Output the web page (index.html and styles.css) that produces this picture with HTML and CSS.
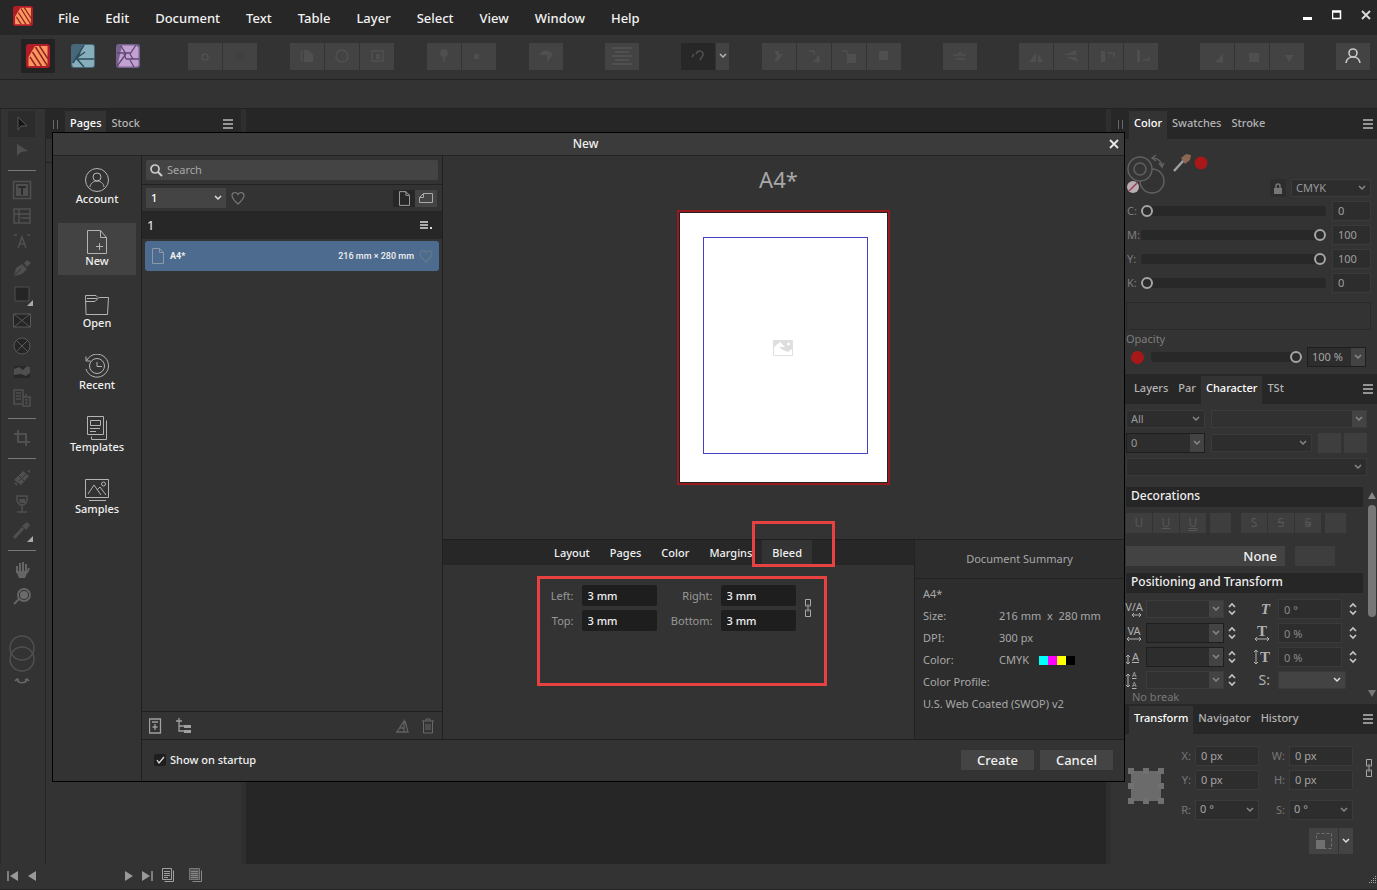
FILE: index.html
```html
<!DOCTYPE html>
<html lang="en">
<head>
<meta charset="utf-8">
<title>Publisher - New Document</title>
<link rel="stylesheet" href="styles.css">
</head>
<body>
<svg class="defs" aria-hidden="true">
  <symbol id="i-pub" viewBox="0 0 24 24"><rect width="24" height="24" rx="3" fill="#b01c28"/><path d="M9 2h12.500v20H2.500v-9z" fill="#ff9560"/><path d="M13.500 2l8.500 13M9.500 3l12 19M6.500 8l9 14M4 13l6 9" stroke="#8a2a20" stroke-width="1.500" fill="none"/></symbol>
  <symbol id="i-des" viewBox="0 0 24 24"><rect width="24" height="24" rx="3" fill="#47687a"/><path d="M12 1h9a2 2 0 0 1 2 2v18a2 2 0 0 1-2 2H2L1 20z" fill="#86aebb"/><path d="M13 1L2 19M10 6l-4 9 7 8M7 15h16M7 13l7-5" stroke="#2e4b5b" stroke-width="1.5" fill="none"/></symbol>
  <symbol id="i-pho" viewBox="0 0 24 24"><rect width="24" height="24" rx="3" fill="#75628c"/><path d="M6 1.500h14l2.500 2v18l-2 1H3l-1-3z" fill="#c3a0d2"/><path d="M5 2l5 8M1 9h14M20 1l-6 9M14 10l3 5M23 15H10M17 15l-3 0M14 16l4 7M10 15l-2-5M1 22l9-12" stroke="#5d4774" stroke-width="1.300" fill="none"/></symbol>
  <symbol id="i-menu" viewBox="0 0 10 10"><path d="M0 1h10M0 5h10M0 9h10" stroke="#b9b9b9" stroke-width="1.6"/></symbol>
  <symbol id="i-heart" viewBox="0 0 14 14"><path d="M7 13C3 9.500 1 7.500 1 4.500 1 1 5.500.5 7 3.500 8.500.5 13 1 13 4.500c0 3-2 5-6 8.500z" fill="none" stroke="currentColor" stroke-width="1.200"/></symbol>
  <symbol id="i-page" viewBox="0 0 12 16"><path d="M.5.500h7l4 4v11H.5zM7.500.500v4h4" fill="none" stroke="currentColor"/></symbol>
  <symbol id="i-spin" viewBox="0 0 8 14"><path d="M1 5l3-3 3 3M1 9l3 3 3-3" fill="none" stroke="#c4c4c4" stroke-width="1.700"/></symbol>
  <symbol id="i-link" viewBox="0 0 8 20"><path d="M1.500 8V1.500h5V8M1.500 12v6.500h5V12M4 6v8M1.500 8h2M4.500 8h2M1.500 12h2M4.500 12h2" fill="none" stroke="#a8a8a8"/></symbol>
  <symbol id="i-person" viewBox="0 0 18 18"><circle cx="9" cy="6" r="4" fill="none" stroke="currentColor" stroke-width="1.600"/><path d="M2 16c1-8 13-8 14 0" fill="none" stroke="currentColor" stroke-width="1.600"/></symbol>
</svg>

<header class="menubar">
  <svg class="logo"><use href="#i-pub"/></svg>
  <nav class="menus">
    <button>File</button><button>Edit</button><button>Document</button><button>Text</button><button>Table</button><button>Layer</button><button>Select</button><button>View</button><button>Window</button><button>Help</button>
  </nav>
  <div class="winctl">
    <button aria-label="Minimize"><svg width="10" height="10"><path d="M0 8.500h9" stroke="#fff" stroke-width="3"/></svg></button>
    <button aria-label="Maximize"><svg width="10" height="10"><path d="M.5 1h8v7.500h-8zM0 2h9" fill="none" stroke="#fff" stroke-width="1.500"/></svg></button>
    <button aria-label="Close"><svg width="10" height="10"><path d="M1 1l8 8M9 1L1 9" stroke="#ddd" stroke-width="1.800"/></svg></button>
  </div>
</header>

<div class="toolbar">
  <div class="personas">
    <button class="persona on" aria-label="Publisher"><svg><use href="#i-pub"/></svg></button>
    <button class="persona" aria-label="Designer"><svg><use href="#i-des"/></svg></button>
    <button class="persona" aria-label="Photo"><svg><use href="#i-pho"/></svg></button>
  </div>
  <div class="tgroup first">
    <button aria-label="Preferences"><svg viewBox="0 0 20 20"><circle cx="10" cy="11" r="3" class="s"/></svg></button>
    <button aria-label="Defaults"><svg viewBox="0 0 20 20"><circle cx="10" cy="10" r="5" fill="#404040"/></svg></button>
  </div>
  <div class="tgroup near">
    <button aria-label="Page layout"><svg viewBox="0 0 20 20"><path d="M4.500 4v12" class="s"/><path d="M7 4h5l4 5v7H7z" class="f"/></svg></button>
    <button aria-label="Preflight"><svg viewBox="0 0 20 20"><circle cx="10" cy="10" r="6" class="s"/></svg></button>
    <button aria-label="Package"><svg viewBox="0 0 20 20"><path d="M5 5h11v10H5z" class="s"/><path d="M9 8h4v5H9z" class="f"/></svg></button>
  </div>
  <div class="tgroup near">
    <button aria-label="Pin"><svg viewBox="0 0 20 20"><path d="M10 8v8" class="s"/><circle cx="10" cy="7" r="4" class="f"/></svg></button>
    <button aria-label="Float"><svg viewBox="0 0 20 20"><path d="M5 8h5v5H5z" class="f"/></svg></button>
  </div>
  <div class="tgroup near"><button aria-label="View mode"><svg viewBox="0 0 20 20"><path d="M3 9c3-6 11-6 14 0l-6 7V9z" class="f"/></svg></button></div>
  <div class="tgroup far"><button aria-label="Baseline grid"><svg viewBox="0 0 20 20" class="crisp"><path d="M0 2h20M3 6h14M0 10h20M3 14h14M0 18h20" class="s"/></svg></button></div>
  <div class="tgroup far">
    <button class="dark" aria-label="Snapping"><svg viewBox="0 0 20 20"><path d="M4 11l2-3M8 8c2-5 8-3 7 1l-3 5" class="s"/></svg></button><button class="narrow" aria-label="Snapping options"><svg viewBox="0 0 8 20"><path d="M1 8l3 3 3-3" fill="none" stroke="#b5b5b5" stroke-width="1.500"/></svg></button>
  </div>
  <div class="tgroup near">
    <button aria-label="Back"><svg viewBox="0 0 20 20"><path d="M5 5h5v3h4L9 15H5l3-5z" class="f"/></svg></button>
    <button aria-label="Backward"><svg viewBox="0 0 20 20"><path d="M9 16l6-8 1 8z" class="f"/><path d="M5 5h5v4" class="s"/></svg></button>
    <button aria-label="Forward"><svg viewBox="0 0 20 20"><path d="M8 8h9v9H8z" class="f"/><path d="M3 5h5v3" class="s"/></svg></button>
    <button aria-label="Front"><svg viewBox="0 0 20 20"><path d="M5 5h9v9H5z" class="f"/></svg></button>
  </div>
  <div class="tgroup far"><button aria-label="Alignment"><svg viewBox="0 0 20 20"><path d="M6 13h9M3 9h13M8 7h4" class="s"/></svg></button></div>
  <div class="tgroup far">
    <button aria-label="Flip horizontal"><svg viewBox="0 0 20 20"><path d="M3 16l7-9v9zM12 7l5 9h-5z" class="f"/></svg></button>
    <button aria-label="Flip vertical"><svg viewBox="0 0 20 20"><path d="M3 9l12-5v5zM5 11h10l2 5z" class="f"/></svg></button>
    <button aria-label="Rotate left"><svg viewBox="0 0 20 20"><path d="M5 5h4v11H5z" class="f"/><path d="M12 7h6v4" class="s"/></svg></button>
    <button aria-label="Rotate right"><svg viewBox="0 0 20 20"><path d="M6 4h3v12H6z" class="f"/><path d="M12 14h6v-3" class="s"/></svg></button>
  </div>
  <div class="tgroup far">
    <button aria-label="Add"><svg viewBox="0 0 20 20"><path d="M8 16l8-8v9z" class="f"/></svg></button>
    <button aria-label="Subtract"><svg viewBox="0 0 20 20"><path d="M7 7h10v9H7z" class="f"/></svg></button>
    <button aria-label="Intersect"><svg viewBox="0 0 20 20"><path d="M8 9h9l-5 7z" class="f"/></svg></button>
  </div>
  <div class="tgroup near"><button class="acct" aria-label="Account"><svg><use href="#i-person"/></svg></button></div>
</div>
<div class="contextbar"></div>

<main class="workspace">
  <aside class="tools">
    <button class="on" aria-label="Move"><svg viewBox="0 0 20 20"><path d="M6 3l9 9H9l-3 4z" fill="#151515" stroke="#555"/></svg></button>
    <button aria-label="Node"><svg viewBox="0 0 20 20"><path d="M5 4l11 7-7 1-4 4z" class="f"/></svg></button>
    <hr>
    <button aria-label="Frame text"><svg viewBox="0 0 20 20"><path d="M1.500 1.500h17v17h-17z" class="s"/><path d="M4 4h12v12H4z" class="f"/><path d="M6 7h8M10 7v8" stroke="#2b2b2b" stroke-width="2"/></svg></button>
    <button aria-label="Table"><svg viewBox="0 0 20 20"><path d="M2 3h16v14H2zM2 8h16M7 3v14M9 12h9" class="s"/></svg></button>
    <button aria-label="Artistic text"><svg viewBox="0 0 20 20"><path d="M6 16l4-11 4 11M7 12h6M2 3h3M15 3h3" class="s"/></svg></button>
    <button aria-label="Pen"><svg viewBox="0 0 20 20"><path d="M2 18l2-8 6-4 5 5-5 5zM12 5l3-3 4 3-4 4z" class="f"/><path d="M3 17l6-6" stroke="#333"/></svg></button>
    <button class="more" aria-label="Rectangle"><svg viewBox="0 0 20 20"><path d="M3 3h14v14H3z" fill="#252525" stroke="#505050"/></svg></button>
    <button aria-label="Picture frame"><svg viewBox="0 0 20 20"><path d="M1.500 4h17v13h-17zM2 4l16 13M18 4L2 17" fill="#252525" stroke="#585858"/></svg></button>
    <button aria-label="Ellipse frame"><svg viewBox="0 0 20 20"><circle cx="10" cy="10" r="8" fill="#252525" stroke="#585858"/><path d="M4 4l12 12M16 4L4 16" stroke="#585858"/></svg></button>
    <button aria-label="Place image"><svg viewBox="0 0 20 20"><path d="M2 4h16v12H2z" class="d"/><path d="M2 7l5-2 4 3 4-4 3 1v6l-4 3-5-2-7 1z" class="f"/></svg></button>
    <button aria-label="Data merge"><svg viewBox="0 0 20 20"><path d="M2 2h9v14H2zM4 5h5M4 8h5M4 11h5M14 6v3M11 9h7v9h-7zM13 12h3M13 15h3" class="s"/></svg></button>
    <hr>
    <button aria-label="Crop"><svg viewBox="0 0 20 20"><path d="M6 2v12h12M2 6h12v12" class="s w"/></svg></button>
    <hr>
    <button aria-label="Fill"><svg viewBox="0 0 20 20"><path d="M2 12l9-9 6 5-8 9zM15 3l3-1v3zM2 15h3v3z" class="f"/><path d="M5 6l8 8M7 13l7-7" stroke="#333"/></svg></button>
    <button aria-label="Transparency"><svg viewBox="0 0 20 20"><path d="M5 2h10c1 6-2 9-5 9S4 8 5 2zM10 11v7M5 18h10" class="s"/><path d="M7 5h6v4H8z" class="f"/></svg></button>
    <button class="more" aria-label="Colour picker"><svg viewBox="0 0 20 20"><path d="M2 18l9-10" class="s w2"/><path d="M10 6l5-4 3 3-4 5z" class="f"/></svg></button>
    <hr>
    <button aria-label="View"><svg viewBox="0 0 20 20"><path d="M5 6v7M8 3v9M11 2v10M14 4v9M17 8l-2 5" class="g"/><path d="M4 11h12l-3 7H7z" fill="#656565"/></svg></button>
    <button aria-label="Zoom"><svg viewBox="0 0 20 20"><circle cx="12" cy="9" r="6" class="g"/><circle cx="12" cy="9" r="4" fill="#6b6b6b"/><path d="M7 13l-5 5" class="g"/></svg></button>
    <div class="fills"><svg width="28" height="62" viewBox="0 0 28 62"><g fill="none" stroke="#505050" stroke-width="1.500"><circle cx="14" cy="15" r="12"/><circle cx="14" cy="26" r="12"/><path d="M9 46c1 5 9 5 10 0M7 48l2-2 2 1M17 47l2-1 2 2" stroke="#666"/></g></svg></div>
  </aside>

  <aside class="leftpanel">
    <div class="tabs"><i class="grip"></i><button class="tab on">Pages</button><button class="tab">Stock</button><button class="burger" aria-label="Panel menu"><svg><use href="#i-menu"/></svg></button></div>
    <div class="pageshead"></div>
  </aside>
  <section class="canvas"></section>

  <aside class="rightpanel">
    <div class="tabs"><i class="grip"></i><button class="tab on">Color</button><button class="tab">Swatches</button><button class="tab">Stroke</button><button class="burger" aria-label="Panel menu"><svg><use href="#i-menu"/></svg></button></div>
    <div class="colorpanel">
      <div class="colortop">
        <svg class="wells" width="90" height="46" viewBox="0 0 90 46"><g fill="none" stroke="#606060" stroke-width="1.500"><circle cx="26" cy="27" r="12"/><circle cx="14" cy="15" r="12" fill="#353535"/><circle cx="14" cy="15" r="6"/><path d="M27 4c5 0 9 4 9 8M30 1l-4 3 4 3M33 9l3 4 2-4"/></g><circle cx="7" cy="33" r="6" fill="#b9aeb2"/><path d="M3 37l8-8" stroke="#a03a5a" stroke-width="1.500"/><path d="M48 17l10-11" stroke="#a0a0a0" stroke-width="2.500"/><path d="M55 4l5-4 5 1-1 5-5 4z" fill="#8c6752"/><circle cx="75" cy="9" r="6.500" fill="#a81818"/></svg>
      </div>
      <div class="modeline">
        <button class="lock" aria-label="Lock"><svg width="8" height="11"><path d="M2 5V3a2 2 0 0 1 4 0v2" fill="none" stroke="#777" stroke-width="1.500"/><path d="M0 5h8v6H0z" fill="#777"/></svg></button>
        <select class="box mode" aria-label="Color model"><option>CMYK</option></select>
      </div>
      <div class="slide"><label for="c">C:</label><input id="c" type="range" value="0"><input class="box" value="0" aria-label="Cyan value"></div>
      <div class="slide"><label for="m">M:</label><input id="m" type="range" value="100"><input class="box" value="100" aria-label="Magenta value"></div>
      <div class="slide"><label for="y">Y:</label><input id="y" type="range" value="100"><input class="box" value="100" aria-label="Yellow value"></div>
      <div class="slide"><label for="k">K:</label><input id="k" type="range" value="0"><input class="box" value="0" aria-label="Black value"></div>
      <div class="strip"></div>
      <label class="oplabel" for="op">Opacity</label>
      <div class="oprow"><i class="dot"></i><input id="op" type="range" value="100"><div class="combo opv"><input value="100 %" aria-label="Opacity value"><button aria-label="Opacity list"></button></div></div>
    </div>

    <div class="tabs"><i class="grip"></i><button class="tab">Layers</button><button class="tab">Par</button><button class="tab on">Character</button><button class="tab">TSt</button><button class="burger" aria-label="Panel menu"><svg><use href="#i-menu"/></svg></button></div>
    <div class="charpanel">
      <div class="frow"><select class="box w78" aria-label="Collection"><option>All</option></select><div class="combo flat grow"><input aria-label="Font family"><button aria-label="Font list"></button></div></div>
      <div class="frow"><div class="combo w78"><input value="0" aria-label="Font size"><button aria-label="Size list"></button></div><select class="box grow" aria-label="Font style"></select><div class="sqs"><button class="sq" aria-label="Text colour"></button><button class="sq" aria-label="Background colour"></button></div></div>
      <div class="frow"><select class="box grow" aria-label="Text style"></select></div>
      <div class="scroller">
        <div class="scrollbody">
          <h3>Decorations</h3>
          <div class="decor"><button>U</button><button><u>U</u></button><button><u class="dbl">U</u></button><i></i><button class="gapl">S</button><button><s>S</s></button><button><s class="dbl">S</s></button><i></i></div>
          <div class="nonerow"><button class="none">None</button><i></i></div>
          <h3>Positioning and Transform</h3>
          <div class="pos">
            <span class="pi">V/A<svg viewBox="0 0 16 4"><path d="M6 2h9M8 0L6 2l2 2M13 0l2 2-2 2"/></svg></span><div class="combo flat"><input aria-label="Kerning"><button aria-label="Kerning list"></button></div><svg class="spin"><use href="#i-spin"/></svg><span class="pi serif"><em>T</em></span><input class="box" value="0 °" aria-label="Shear"><svg class="spin"><use href="#i-spin"/></svg>
            <span class="pi">VA<svg viewBox="0 0 16 4"><path d="M1 2h14M3 0L1 2l2 2M13 0l2 2-2 2"/></svg></span><div class="combo"><input aria-label="Tracking"><button aria-label="Tracking list"></button></div><svg class="spin"><use href="#i-spin"/></svg><span class="pi serif">T<svg viewBox="0 0 16 4"><path d="M1 2h14M3 0L1 2l2 2M13 0l2 2-2 2"/></svg></span><input class="box" value="0 %" aria-label="Horizontal scale"><svg class="spin"><use href="#i-spin"/></svg>
            <span class="pi side"><svg viewBox="0 0 4 16"><path d="M2 6v9M0 8l2-2 2 2M0 13l2 2 2-2"/></svg><u>A</u></span><div class="combo"><input aria-label="Baseline"><button aria-label="Baseline list"></button></div><svg class="spin"><use href="#i-spin"/></svg><span class="pi side serif"><svg viewBox="0 0 4 16"><path d="M2 1v14M0 3l2-2 2 2M0 13l2 2 2-2"/></svg>T</span><input class="box" value="0 %" aria-label="Vertical scale"><svg class="spin"><use href="#i-spin"/></svg>
            <span class="pi side"><svg viewBox="0 0 4 16"><path d="M2 2v13M0 4l2-2 2 2M0 13l2 2 2-2"/></svg><span class="aa"><u>A</u><u>A</u></span></span><div class="combo flat"><input aria-label="Leading"><button aria-label="Leading list"></button></div><svg class="spin"><use href="#i-spin"/></svg><span class="pi big">S:</span><select class="box lite" aria-label="Position"></select>
          </div>
          <div class="nobreak">No break</div>
        </div>
        <div class="scrollbar"><i class="up"></i><i class="thumb"></i><i class="down"></i></div>
      </div>
    </div>

    <div class="tabs"><i class="grip"></i><button class="tab on">Transform</button><button class="tab">Navigator</button><button class="tab">History</button><button class="burger" aria-label="Panel menu"><svg><use href="#i-menu"/></svg></button></div>
    <div class="transform">
      <svg class="anchor" width="36" height="36" viewBox="0 0 36 36"><path d="M3 3h30v30H3z" fill="#6b6b6b"/><path d="M0 0h6v6H0zM15 0h6v6h-6zM30 0h6v6h-6zM0 15h6v6H0zM30 15h6v6h-6zM0 30h6v6H0zM15 30h6v6h-6zM30 30h6v6h-6z" fill="#707070"/></svg>
      <div class="tgrid">
        <label for="tx">X:</label><input id="tx" class="box" value="0 px"><label for="tw">W:</label><input id="tw" class="box" value="0 px">
        <label for="ty">Y:</label><input id="ty" class="box" value="0 px"><label for="th">H:</label><input id="th" class="box" value="0 px">
        <label for="tr">R:</label><select id="tr" class="box"><option>0 °</option></select><label for="ts">S:</label><select id="ts" class="box"><option>0 °</option></select>
        <div class="scalebtn"><button aria-label="Scale"><svg width="16" height="16"><path d="M.5.5h15v15H.5z" fill="none" stroke="#707070" stroke-dasharray="3 2"/><path d="M0 7h9v9H0z" fill="#707070"/></svg></button><button class="arr" aria-label="Scale options"></button></div>
      </div>
      <svg class="tlink" width="8" height="22"><use href="#i-link"/></svg>
    </div>
  </aside>

  <div class="dialog" role="dialog" aria-label="New">
    <div class="dtitle"><span>New</span><button aria-label="Close"><svg width="10" height="10"><path d="M1 1l8 8M9 1L1 9" stroke="#e8e8e8" stroke-width="1.800"/></svg></button></div>
    <div class="dbody">
      <nav class="dnav">
        <button><svg viewBox="0 0 24 24"><circle cx="12" cy="12" r="11.500"/><circle cx="12" cy="9" r="4"/><path d="M5 19c1-8 13-8 14 0"/></svg>Account</button>
        <button class="on"><svg viewBox="0 0 24 24"><path d="M2.500.5h13l6 7v16h-19zM15.500.5v7h6M14.500 13v7M11 16.500h7"/></svg>New</button>
        <button><svg viewBox="0 0 24 24"><path d="M1 22.500L.5 3.500H11l2 2M.5 9.500H10l4-4h9.500l-1 17H1M2 6.500h10"/></svg>Open</button>
        <button><svg viewBox="0 0 24 24"><path d="M2 6a11.500 11.500 0 1 1-1 9M1 2.500v4.500h4.500"/><circle cx="12" cy="12" r="7.500"/><path d="M12 8v4.500h5"/></svg>Recent</button>
        <button><svg viewBox="0 0 24 24"><path d="M2.500.5h16v18h-16zM5.500 4.500h10v5h-10zM5 12.500h10M5 15.500h6M21.500 4.500v19h-15v-3"/></svg>Templates</button>
        <button><svg viewBox="0 0 24 24"><path d="M.5 1.500h23v18H.5zM4 22.500h17M3 16l6-9 7 10M12 12l3-3 6 8"/><circle cx="18.500" cy="6" r="2"/></svg>Samples</button>
      </nav>
      <div class="dmain">
        <div class="dcols">
          <section class="presets">
            <div class="searchrow"><label class="search"><svg width="13" height="13" viewBox="0 0 13 13"><circle cx="5" cy="5" r="4" fill="none" stroke="#ccc" stroke-width="1.700"/><path d="M8 8l4 4" stroke="#ccc" stroke-width="2"/></svg><input type="search" placeholder="Search" aria-label="Search"></label></div>
            <div class="filter"><select aria-label="Category"><option>1</option></select><svg class="heart"><use href="#i-heart"/></svg><button class="pt on" aria-label="Portrait"><svg width="11" height="15"><use href="#i-page"/></svg></button><button class="pt" aria-label="Landscape"><svg width="16" height="12" viewBox="0 0 16 12"><path d="M5.500 1.500h9v9H1.500v-5zM5.500 1.500v4h-4" fill="none" stroke="currentColor"/></svg></button></div>
            <div class="cat"><span>1</span><button aria-label="Category menu"><svg width="13" height="10"><path d="M0 2h8M0 5h8M0 8h8" stroke="#ddd" stroke-width="1.500"/><path d="M10 7h2v2h-2z" fill="#ddd"/></svg></button></div>
            <button class="preset"><svg class="pg"><use href="#i-page"/></svg><b>A4*</b><span>216 mm × 280 mm</span><svg class="heart"><use href="#i-heart"/></svg></button>
            <div class="pfoot">
              <button aria-label="Create preset"><svg width="14" height="16" viewBox="0 0 14 16"><path d="M.5 1h11v14H.5zM3 4h6M6 6v6M3.500 9h5" fill="none" stroke="#a0a0a0" stroke-width="1.300"/></svg></button>
              <button aria-label="Create category"><svg width="17" height="16" viewBox="0 0 17 16"><path d="M3 0v13h5M0 3h6M3 8h5" fill="none" stroke="#a0a0a0" stroke-width="1.300"/><path d="M8 7h7v3H8zM8 12h7v3H8z" fill="#a0a0a0"/></svg></button>
              <button class="push" aria-label="Rename"><svg width="14" height="16" viewBox="0 0 14 16"><path d="M2 14L9 3v11M5 10h4M10 3l3 11H1" fill="none" stroke="#626262" stroke-width="1.300"/></svg></button>
              <button aria-label="Delete"><svg width="12" height="16" viewBox="0 0 12 16"><path d="M0 3h12M4 3V1h4v2M1.500 3v12h9V3M4 6v6M6 6v6M8 6v6" fill="none" stroke="#686868"/></svg></button>
            </div>
          </section>
          <section class="right">
            <div class="preview">
              <h1>A4*</h1>
              <div class="bleed"><div class="paper"><div class="margin"><svg width="20" height="16" viewBox="0 0 20 16"><path d="M.5.5h19v15H.5z" fill="none" stroke="#e0e0e0"/><path d="M1 1h18v8l-4 3-5-2-4-3H1z" fill="#dedede"/><path d="M2 6l5-4 3 3 2 2H2zM14 4a1.500 1.500 0 1 0 3 0 1.500 1.500 0 1 0-3 0" fill="#fff"/></svg></div></div></div>
            </div>
            <div class="lower">
              <div class="settings">
                <div class="stabs"><button>Layout</button><button>Pages</button><button>Color</button><button>Margins</button><button class="on">Bleed</button></div>
                <div class="bform">
                  <label for="bl">Left:</label><input id="bl" value="3 mm"><label for="br">Right:</label><input id="br" value="3 mm">
                  <svg class="blink" width="8" height="20"><use href="#i-link"/></svg>
                  <label for="bt">Top:</label><input id="bt" value="3 mm"><label for="bb">Bottom:</label><input id="bb" value="3 mm">
                </div>
                <i class="mark m1"></i><i class="mark m2"></i>
              </div>
              <div class="summary">
                <h2>Document Summary</h2>
                <dl>
                  <dt>A4*</dt><dd></dd>
                  <dt>Size:</dt><dd>216 mm&nbsp; x&nbsp; 280 mm</dd>
                  <dt>DPI:</dt><dd>300 px</dd>
                  <dt>Color:</dt><dd>CMYK <span class="cmyk"><i class="cy"></i><i class="mg"></i><i class="ye"></i><i class="bk"></i></span></dd>
                  <dt class="full">Color Profile:</dt>
                  <dt class="full">U.S. Web Coated (SWOP) v2</dt>
                </dl>
              </div>
            </div>
          </section>
        </div>
        <div class="dfoot"><label class="show"><input type="checkbox" checked>Show on startup</label><button class="btn">Create</button><button class="btn">Cancel</button></div>
      </div>
    </div>
  </div>
</main>

<footer class="status">
  <button aria-label="First page"><svg width="12" height="12"><path d="M1 1v10" stroke="#999" stroke-width="1.500"/><path d="M11 1v10L3 6z" fill="#999"/></svg></button>
  <button aria-label="Previous page"><svg width="9" height="12"><path d="M9 1v10L1 6z" fill="#999"/></svg></button>
  <button class="nextp" aria-label="Next page"><svg width="9" height="12"><path d="M0 1v10l8-5z" fill="#999"/></svg></button>
  <button aria-label="Last page"><svg width="12" height="12"><path d="M10 1v10" stroke="#999" stroke-width="1.500"/><path d="M0 1v10l8-5z" fill="#999"/></svg></button>
  <button aria-label="Spreads"><svg width="13" height="15" viewBox="0 0 13 15"><path d="M.5.5h9v11h-9zM2 3.500h6M2 5.500h6M2 7.500h6M2 9.500h4M11.500 2.500v11h-9" fill="none" stroke="#a0a0a0"/></svg></button>
  <button class="sp2" aria-label="Pages"><svg width="14" height="15" viewBox="0 0 14 15"><path d="M.5.5h10v11H.5z" fill="#555" stroke="#777"/><path d="M2 3.500h7M2 5.500h7M2 7.500h7M2 9.500h7M12.500 2.500v11h-9" fill="none" stroke="#888"/></svg></button>
  <svg class="resize" width="8" height="8"><path d="M6 0h1v1H6zM4 2h1v1H4zM6 2h1v1H6zM2 4h1v1H2zM4 4h1v1H4zM6 4h1v1H6zM0 6h1v1H0zM2 6h1v1H2zM4 6h1v1H4zM6 6h1v1H6z" fill="#aaa"/></svg>
</footer>
</body>
</html>
```

FILE: styles.css
```css
:root {
  --bg: #333;
  --dark: #272727;
  --chev: url("data:image/svg+xml,%3Csvg xmlns='http://www.w3.org/2000/svg' width='8' height='6'%3E%3Cpath d='M1 1l3 3 3-3' fill='none' stroke='%23888' stroke-width='1.5'/%3E%3C/svg%3E");
  --chev-light: url("data:image/svg+xml,%3Csvg xmlns='http://www.w3.org/2000/svg' width='8' height='6'%3E%3Cpath d='M1 1l3 3 3-3' fill='none' stroke='%23ddd' stroke-width='1.5'/%3E%3C/svg%3E");
}
* { box-sizing: border-box; }
body { margin: 0; height: 100vh; display: flex; flex-direction: column; background: var(--bg); color: #b4b4b4; font: 11px/16px "Noto Sans", "Open Sans", sans-serif; overflow: hidden; }
button, input, select { font: inherit; color: inherit; border: 0; margin: 0; padding: 0; background: none; border-radius: 0; min-width: 0; }
select { appearance: none; background: var(--chev) no-repeat right 4px center; }
.defs { position: absolute; width: 0; height: 0; }
svg { display: block; flex: none; }
h1, h2, h3, dl, dd { margin: 0; font-weight: 400; }
.crisp { shape-rendering: crispEdges; }

.menubar { display: flex; align-items: center; height: 35px; flex: none; padding: 0 6px 0 13px; background: var(--dark); color: #f2f2f2; }
.logo { width: 20px; height: 20px; margin-bottom: 4px; }
.menus { display: flex; gap: 26px; margin-left: 25px; font-size: 13px; font-weight: 500; }
.winctl { display: flex; gap: 19px; margin-left: auto; padding-bottom: 5px; }

.toolbar { display: flex; align-items: center; height: 45px; flex: none; padding: 0 7px 2px 21px; border-bottom: 1px solid #222; }
.personas { display: flex; gap: 11px; }
.persona { width: 34px; height: 34px; display: grid; place-items: center; }
.persona.on { background: #232323; }
.persona svg { width: 24px; height: 24px; }
.tgroup { display: flex; gap: 1px; }
.tgroup.first { margin-left: 43px; }
.tgroup.near { margin-left: 33px; }
.tgroup.far { margin-left: 42px; }
.tgroup.near:last-child { margin-left: auto; }
.tgroup button { width: 34px; height: 27px; display: grid; place-items: center; background: #434343; color: #c8c8c8; }
.tgroup button.dark { background: #272727; }
.tgroup button.narrow { width: 13px; }
.tgroup svg { width: 20px; height: 20px; }
.tgroup .narrow svg { width: 8px; }
.tgroup .acct svg { width: 18px; height: 18px; }
.s { fill: none; stroke: #505050; stroke-width: 1.5; }
.f { fill: #4f4f4f; }
.d { fill: #282828; }
.contextbar { height: 29px; flex: none; border-bottom: 1px solid #222; }

.workspace { position: relative; flex: 1; min-height: 0; display: flex; }
.tools { width: 46px; flex: none; display: flex; flex-direction: column; padding: 2px 10px 0 7px; border-right: 1px solid #252525; border-left: 1px solid #292929; }
.tools button { position: relative; height: 26px; display: grid; place-items: center; }
.tools button.on { background: #2c2c2c; }
.tools svg { width: 20px; height: 20px; }
.tools .w { stroke-width: 2; }
.tools .w2 { stroke-width: 3; }
.tools .g { fill: none; stroke: #656565; stroke-width: 2; }
.tools .more::after { content: ""; position: absolute; right: 2px; bottom: 1px; border: 3px solid transparent; border-right-color: #aaa; border-bottom-color: #aaa; }
.tools hr { width: 28px; height: 1px; margin: 7px 0 6px; border: 0; background: #777; }
.tools .fills { margin-top: 24px; }
.tools .fills svg { width: 28px; height: 62px; }

.leftpanel { width: 200px; flex: none; border-right: 5px solid #2f2f2f; }
.tabs { display: flex; height: 30px; padding: 2px 4px 0 0; background: var(--dark); font-weight: 500; }
.grip { width: 5px; height: 9px; margin: 9px 7px 0 7px; border: solid #666; border-width: 0 1px; }
.tab { padding: 0 5px 4px; }
.tab.on { background: var(--bg); color: #fff; }
.burger { margin-left: auto; padding-bottom: 3px; }
.burger svg { width: 10px; height: 10px; }
.leftpanel .burger { margin-right: 4px; }
.pageshead { height: 24px; border-bottom: 1px solid #222; }
.canvas { flex: 1; background: #262626; border-right: 5px solid #2f2f2f; }

.rightpanel { width: 266px; flex: none; }
.rightpanel .grip { margin-right: 6px; }
.box { height: 20px; padding: 0 5px; border: 1px solid #3a3a3a; background-color: #2d2d2d; }
.box:is(select) { height: 18px; padding: 0 4px; }
.colorpanel { height: 235px; padding: 15px 6px 0 15px; color: #7d7d7d; }
.colortop { height: 25px; }
.modeline { display: flex; gap: 5px; justify-content: flex-end; height: 20px; }
.lock { width: 16px; display: grid; place-items: center; background: #2d2d2d; height: 18px; }
.mode { width: 80px; color: #999; }
.slide { display: flex; align-items: center; height: 24px; }
.slide label { width: 15px; padding-left: 1px; }
.slide input.box { width: 39px; margin-left: 6px; padding-bottom: 2px; color: #a0a0a0; }
input[type="range"] { appearance: none; flex: 1; height: 12px; }
input[type="range"]::-webkit-slider-runnable-track { height: 10px; background: #282828; border-radius: 3px; }
input[type="range"]::-webkit-slider-thumb { appearance: none; width: 12px; height: 12px; margin-top: -1px; border: 2px solid #a5a5a5; border-radius: 50%; background: #2b2b2b; }
.strip { height: 28px; margin: 7px 0 1px; border: 1px solid #2a2a2a; }
.oplabel { display: block; }
.oprow { display: flex; align-items: center; height: 20px; margin-right: 5px; }
.dot { width: 13px; height: 13px; margin: 0 7px 0 5px; border-radius: 50%; background: #a81818; }
.combo { display: flex; height: 20px; border: 1px solid #1e1e1e; background: #2d2d2d; color: #a5a5a5; }
.combo.flat { height: 18px; border-color: #3c3c3c; background: #313131; }
.combo input { flex: 1; width: 0; padding: 0 4px; }
.combo button { width: 14px; background: #434343 var(--chev) no-repeat center; }
.opv { width: 59px; margin-left: 5px; }

.charpanel { height: 300px; padding: 3px 0 0 15px; }
.frow { display: flex; align-items: center; gap: 6px; height: 24px; margin-right: 10px; }
.frow .w78 { width: 79px; color: #999; }
.grow { flex: 1; }
.sqs { display: flex; gap: 3px; }
.sq { width: 23px; height: 20px; background: #3e3e3e; }
.scroller { display: flex; margin-top: 8px; height: 217px; }
.scrollbody { flex: 1; min-width: 0; }
h3 { height: 20px; padding-left: 5px; background: #262626; color: #f0f0f0; font-size: 12px; line-height: 17px; font-weight: 500; }
.decor { display: flex; gap: 1px; margin: 6px 0 13px; height: 20px; }
.decor button { width: 26px; background: #3e3e3e; color: #575757; font-size: 12px; }
.decor i { width: 21px; margin-left: 3px; background: #3e3e3e; }
.decor .gapl { margin-left: 9px; }
.dbl { text-decoration-style: double; }
.nonerow { display: flex; gap: 10px; height: 20px; margin-bottom: 7px; }
.nonerow i { width: 40px; background: #3e3e3e; }
.none { width: 159px; padding-right: 8px; background: #434343; color: #f0f0f0; font-size: 13px; font-weight: 500; text-align: right; }
.pos { display: grid; grid-template-columns: 16px 78px 8px 34px 64px 8px; column-gap: 4px; grid-template-rows: 24px 24px 24px 22px; align-items: center; padding-top: 4px; }
.pos > :nth-child(6n + 4) { justify-self: end; margin-right: 4px; }
.pos > :nth-child(6n) { margin-left: 3px; }
.pi { display: flex; flex-direction: column; align-items: center; font-size: 11px; line-height: 12px; color: #b0b0b0; }
.pi svg { width: 16px; height: 4px; fill: none; stroke: #b0b0b0; }
.pi.serif { font-family: "Liberation Serif", serif; font-size: 15px; font-weight: 700; }
.pi.side { flex-direction: row; }
.pi.side svg { width: 4px; height: 16px; margin-right: 2px; }
.pi.big { font-size: 14px; }
.aa { display: grid; font-size: 7px; line-height: 10px; }
.spin { width: 8px; height: 14px; }
.pos .box { color: #8a8a8a; }
.pos .lite { width: 68px; background-color: #434343; background-image: var(--chev-light); }
.nobreak { padding-left: 6px; color: #777; line-height: 12px; }
.scrollbar { width: 14px; display: flex; flex-direction: column; align-items: flex-end; padding: 5px 1px 7px 0; }
.up, .down { border: 4px solid transparent; }
.up { border-bottom: 7px solid #888; border-top: 0; }
.down { margin-top: auto; border-top: 7px solid #777; border-bottom: 0; }
.thumb { width: 8px; height: 112px; margin-top: 6px; border-radius: 4px; background: #777; }

.transform { display: flex; padding: 10px 4px 0 17px; color: #777; }
.anchor { margin-top: 24px; }
.tgrid { display: grid; grid-template-columns: 27px 64px 22px 64px; column-gap: 4px; grid-template-rows: 24px 24px 36px 26px; align-items: center; }
.tgrid label { text-align: right; }
.tgrid .box { height: 20px; padding-bottom: 2px; color: #a5a5a5; }
.scalebtn { grid-column: 4; display: flex; gap: 1px; height: 26px; justify-self: end; }
.scalebtn button { width: 29px; display: grid; place-items: center; background: #434343; }
.scalebtn .arr { width: 14px; background: #434343 var(--chev-light) no-repeat center; }
.tlink { margin: 13px 0 0 auto; }

.dialog { position: absolute; inset: 23px 252px 82px 52px; display: flex; flex-direction: column; border: 1px solid #000; background: var(--bg); }
.dtitle { display: flex; align-items: center; height: 23px; flex: none; padding: 0 5px 1px 9px; background: #3b3b3b; border-bottom: 1px solid #222; color: #eee; font-size: 12px; font-weight: 500; }
.dtitle span { flex: 1; text-align: center; }
.dbody { flex: 1; display: flex; min-height: 0; }
.dnav { width: 89px; flex: none; display: flex; flex-direction: column; gap: 10px; padding: 5px 5px; border-right: 1px solid #1f1f1f; }
.dnav button { height: 52px; display: flex; flex-direction: column; align-items: center; padding-top: 7px; color: #f0f0f0; font-weight: 500; line-height: 14px; }
.dnav .on { background: #434343; }
.dnav svg { width: 24px; height: 24px; fill: none; stroke: #b4b4b4; }
.dmain { flex: 1; display: flex; flex-direction: column; min-width: 0; }
.dcols { flex: 1; display: flex; min-height: 0; }
.presets { width: 301px; flex: none; display: flex; flex-direction: column; border-right: 1px solid #1f1f1f; }
.searchrow { height: 29px; padding: 4px; border-bottom: 1px solid #222; }
.search { display: flex; align-items: center; gap: 4px; height: 20px; padding: 0 4px; background: #444; border-radius: 2px; }
.search input { flex: 1; }
.search input::placeholder { color: #a8a8a8; }
.filter { display: flex; align-items: center; height: 26px; padding: 0 5px 0 4px; color: #aaa; }
.filter select { width: 80px; height: 20px; padding-left: 5px; background: #444 var(--chev-light) no-repeat right 4px center; color: #fff; font-weight: 500; }
.heart { width: 14px; height: 14px; margin-left: 5px; color: #777; }
.pt { width: 22px; height: 17px; display: grid; place-items: center; background: #444; }
.pt.on { margin-left: auto; background: #272727; }
.cat { display: flex; align-items: center; height: 28px; padding: 0 9px 0 5px; background: #272727; color: #f0f0f0; font-size: 13px; }
.cat button { margin-left: auto; }
.preset { display: flex; align-items: center; height: 30px; margin: 2px 3px; padding: 0 6px 0 7px; border-radius: 3px; background: #4d6b8e; color: #f0f0f0; font-family: Roboto, sans-serif; font-size: 9px; font-weight: 500; }
.preset .pg { width: 12px; height: 16px; color: #8b98a6; margin-right: 6px; }
.preset b { font-weight: 700; }
.preset span { margin-left: auto; }
.preset .heart { color: #66788c; }
.pfoot { display: flex; align-items: center; gap: 13px; height: 28px; margin-top: auto; padding: 0 8px 0 7px; border-top: 1px solid #1f1f1f; }
.push { margin-left: auto; }
.right { flex: 1; display: flex; flex-direction: column; min-width: 0; }
.preview { flex: 1; display: flex; flex-direction: column; align-items: center; padding-top: 10px; }
h1 { font-size: 22px; line-height: 26px; color: #a8a8a8; margin-right: 10px; }
.bleed { margin-top: 18px; padding: 1px; border: 2px solid #981a1f; background: #222; }
.paper { padding: 24px 19px 28px 23px; background: #fff; }
.margin { width: 165px; height: 217px; display: grid; place-items: center; padding: 4px 5px 0 0; border: 1px solid #4540c8; }
.lower { display: flex; height: 200px; flex: none; border-top: 1px solid #1f1f1f; }
.settings { position: relative; flex: 1; }
.stabs { display: flex; justify-content: center; height: 25px; padding-right: 1px; background: #272727; color: #f0f0f0; font-weight: 500; }
.stabs button { padding: 0 10px; }
.stabs .on { background: #333; }
.bform { display: grid; grid-template-columns: 23px 75px 48px 75px 8px; gap: 4px 8px; justify-content: center; align-items: center; padding: 20px 0 0 5px; }
.bform label { text-align: right; white-space: nowrap; color: #999; }
.bform input { height: 21px; padding: 0 6px; border-radius: 2px; background: #1e1e1e; color: #f0f0f0; font-weight: 500; }
.blink { grid-column: 5; grid-row: 1 / 3; }
.mark { position: absolute; border: 3px solid #e84142; }
.m1 { left: calc(50% + 73px); top: -19px; width: 83px; height: 46px; }
.m2 { left: calc(50% - 142px); top: 36px; width: 290px; height: 110px; }
.summary { width: 210px; flex: none; border-left: 1px solid #222; background: #2d2d2d; }
h2 { height: 39px; border-bottom: 1px solid #222; font-size: 11px; line-height: 38px; text-align: center; color: #a8a8a8; }
dl { display: grid; grid-template-columns: 68px 1fr; column-gap: 8px; grid-auto-rows: 22px; padding: 4px 8px; line-height: 22px; color: #a8a8a8; white-space: nowrap; }
.full { grid-column: 1 / 3; }
dd { display: flex; align-items: center; gap: 10px; }
.cmyk { display: flex; }
.cmyk i { width: 9px; height: 9px; }
.cy { background: #0ff; } .mg { background: #f0f; } .ye { background: #ff0; } .bk { background: #000; }
.dfoot { display: flex; align-items: center; gap: 6px; height: 42px; flex: none; padding: 0 11px 2px 12px; border-top: 1px solid #1f1f1f; color: #f0f0f0; font-weight: 500; }
.show { display: flex; align-items: center; gap: 4px; margin-right: auto; }
.show input { appearance: none; width: 12px; height: 12px; background: #1e1e1e url("data:image/svg+xml,%3Csvg xmlns='http://www.w3.org/2000/svg' width='12' height='12'%3E%3Cpath d='M3 6l2 3 5-6' fill='none' stroke='%23ddd' stroke-width='1.3'/%3E%3C/svg%3E"); border-radius: 2px; }
.btn { width: 73px; height: 20px; background: #444; font-size: 13px; line-height: 18px; }

.status { display: flex; align-items: center; height: 26px; flex: none; padding: 0 0 2px 7px; border-bottom: 1px solid #222; }
.status button { margin-right: 8px; }
.status .nextp { margin-left: 81px; }
.status .sp2 { margin-left: 6px; }
.resize { margin: 8px 0 0 auto; }
```
